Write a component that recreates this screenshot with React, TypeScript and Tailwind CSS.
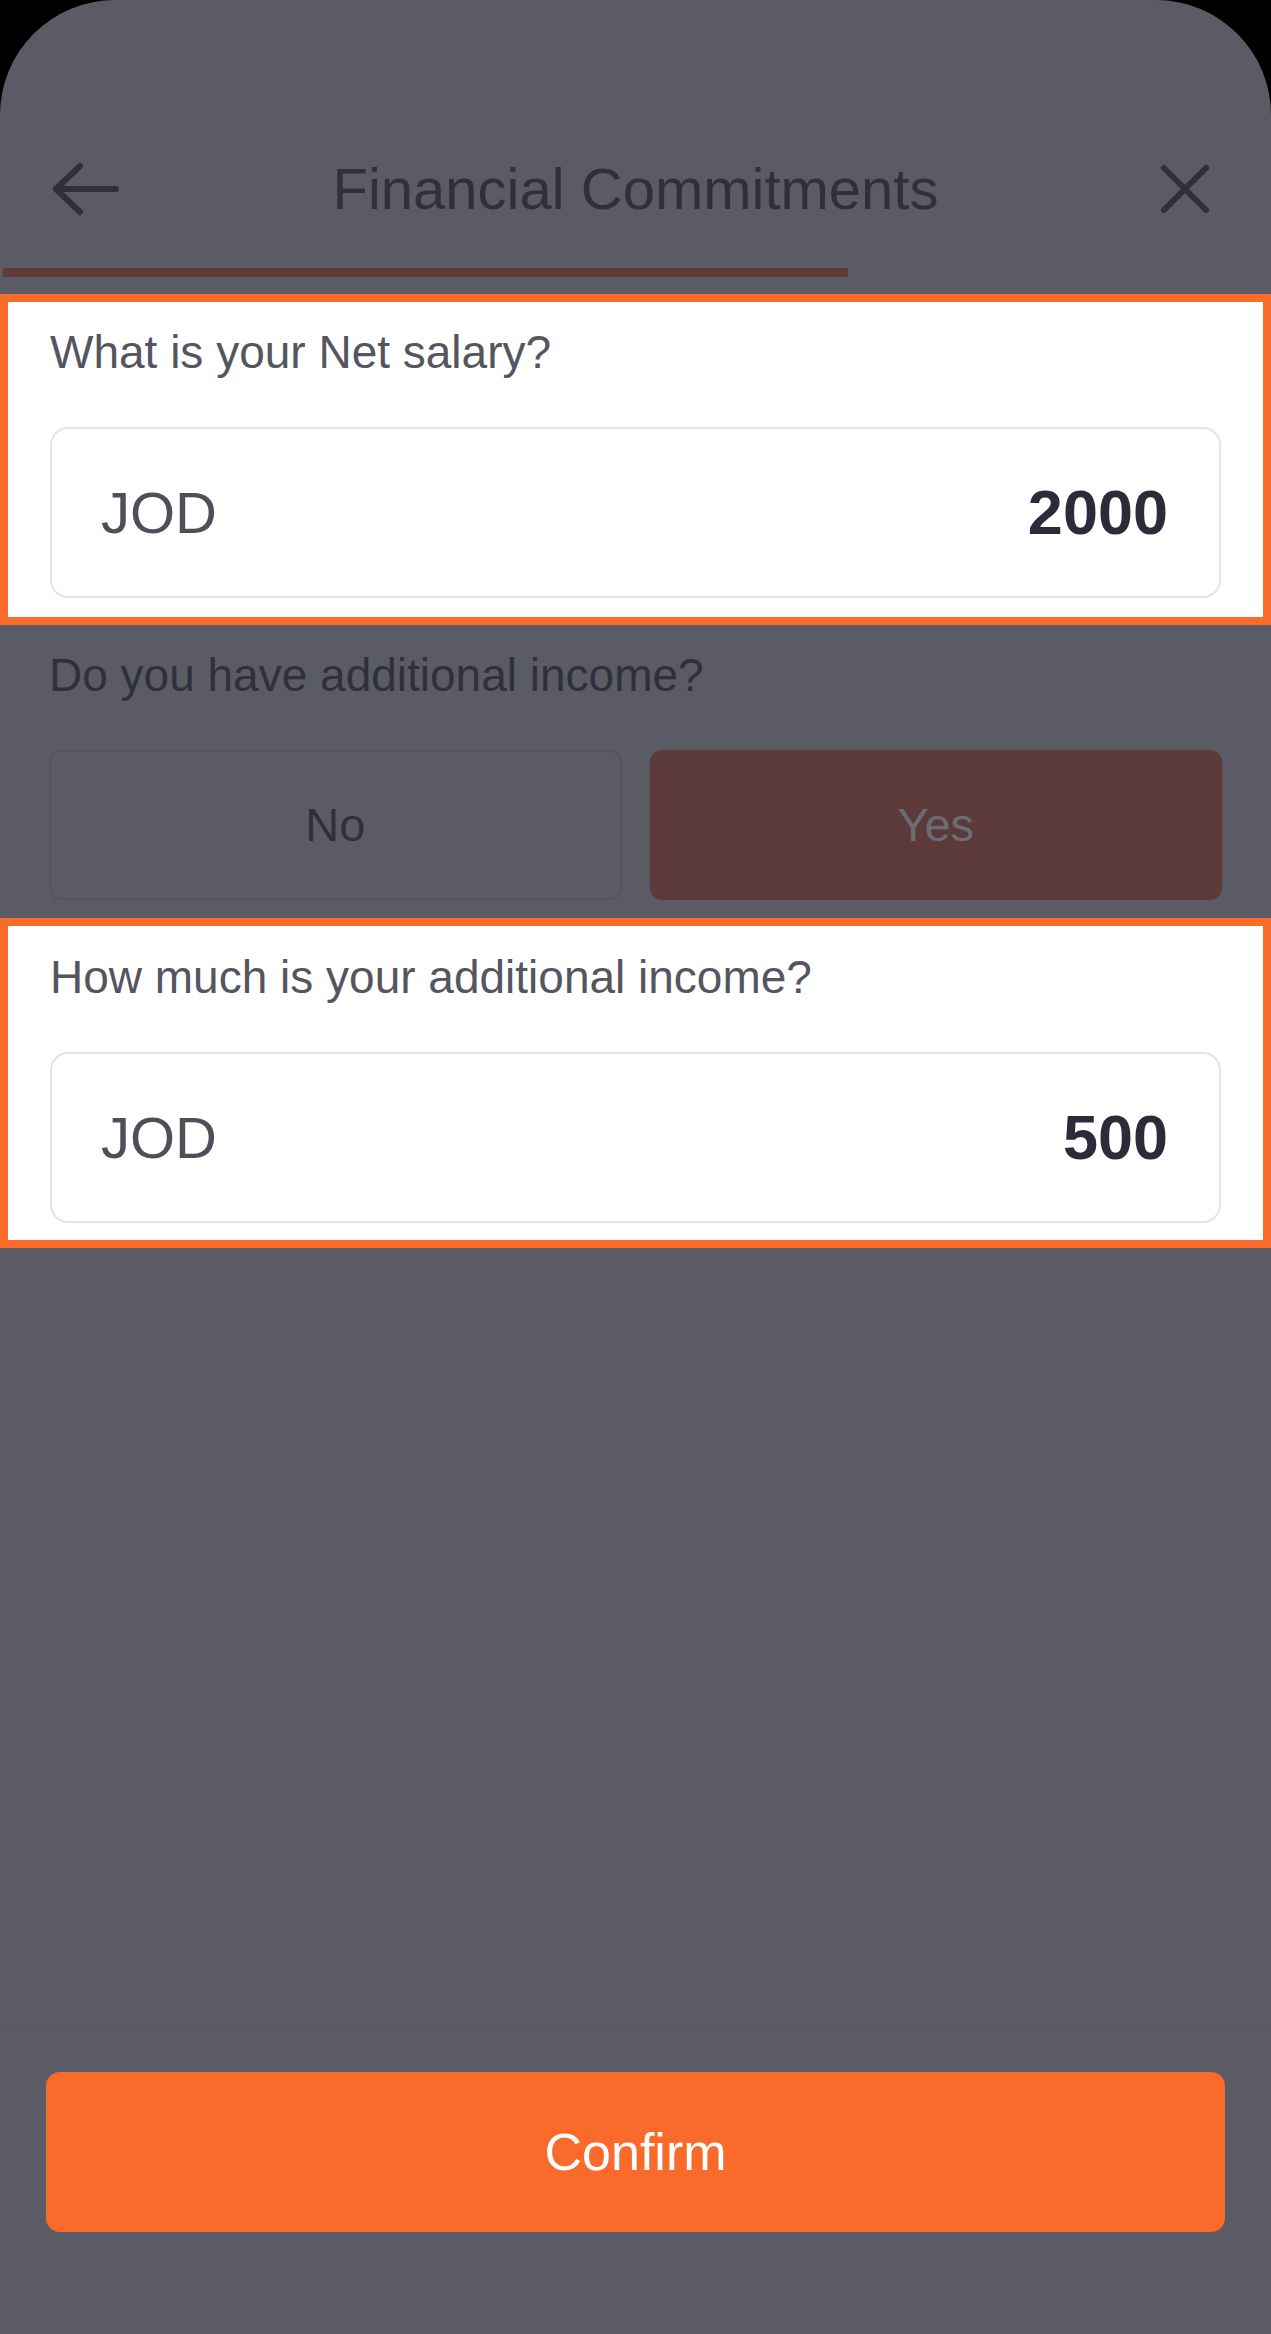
import { useState } from 'react';

const font = { fontFamily: '"Liberation Sans", Arial, sans-serif' };

function BackIcon() {
  return (
    <svg width="68" height="54" viewBox="0 0 68 54" fill="none" stroke="#30303d" strokeWidth="6" strokeLinecap="round" strokeLinejoin="round">
      <path d="M4 27H64" />
      <path d="M28 4L4 27L28 50" />
    </svg>
  );
}

function CloseIcon() {
  return (
    <svg width="52" height="52" viewBox="0 0 52 52" fill="none" stroke="#30303d" strokeWidth="6" strokeLinecap="round">
      <path d="M5 5L47 47" />
      <path d="M47 5L5 47" />
    </svg>
  );
}

function AmountField({ label, value, top }: { label: string; value: string; top: string }) {
  return (
    <section className={`border-[8px] border-[#f96a2b] bg-white px-[42px] ${top}`}>
      <p className="text-[46px] leading-none text-[#55555f]">{label}</p>
      <div className="mt-[52px] flex h-[171px] items-center justify-between rounded-[18px] border-2 border-[#e4e4e6] pl-[49px] pr-[51px]">
        <span className="text-[58px] leading-none text-[#4f4f59]">JOD</span>
        <span className="text-[63px] font-bold leading-none text-[#2b2b39]">{value}</span>
      </div>
    </section>
  );
}

export default function App() {
  const [extra, setExtra] = useState(true);

  return (
    <div className="h-[2334px] w-[1271px] bg-black" style={font}>
      <div className="flex h-full flex-col rounded-t-[115px] bg-[#5b5b66]">
        {/* Header */}
        <div className="mt-[159px] grid h-[60px] grid-cols-[1fr_auto_1fr] items-center">
          <button className="justify-self-start pl-[52px]">
            <BackIcon />
          </button>
          <h1 className="text-[58px] leading-none text-[#30303d]">Financial Commitments</h1>
          <button className="justify-self-end pr-[60px]">
            <CloseIcon />
          </button>
        </div>

        {/* Progress */}
        <div className="ml-[3px] mt-[49px] h-[9px] w-[845px] bg-[#5e3a39]" />

        <div className="mt-[17px]">
          <AmountField label="What is your Net salary?" value="2000" top="pt-[27px] pb-[19px]" />
        </div>

        {/* Additional income question */}
        <div className="px-[49px]">
          <p className="mt-[27px] text-[46px] leading-none text-[#30303d]">Do you have additional income?</p>
          <div className="mt-[52px] grid h-[150px] grid-cols-2 gap-[28px]">
            <button
              onClick={() => setExtra(false)}
              className={`rounded-[12px] border-2 text-[47px] ${!extra ? 'border-transparent bg-[#5c3a3a] text-[#6c6c77]' : 'border-[#55555f] text-[#30303d]'}`}
            >
              No
            </button>
            <button
              onClick={() => setExtra(true)}
              className={`rounded-[12px] border-2 text-[47px] ${extra ? 'border-transparent bg-[#5c3a3a] text-[#6c6c77]' : 'border-[#55555f] text-[#30303d]'}`}
            >
              Yes
            </button>
          </div>
        </div>

        <div className="mt-[18px]">
          {extra && <AmountField label="How much is your additional income?" value="500" top="pt-[28px] pb-[17px]" />}
        </div>

        <div className="flex-1" />

        {/* Footer */}
        <div className="border-t border-[#57575f] px-[46px] pb-[102px] pt-[41px]">
          <button className="flex h-[160px] w-full items-center justify-center rounded-[14px] bg-[#f96a2b] text-[52px] text-white">
            Confirm
          </button>
        </div>
      </div>
    </div>
  );
}
